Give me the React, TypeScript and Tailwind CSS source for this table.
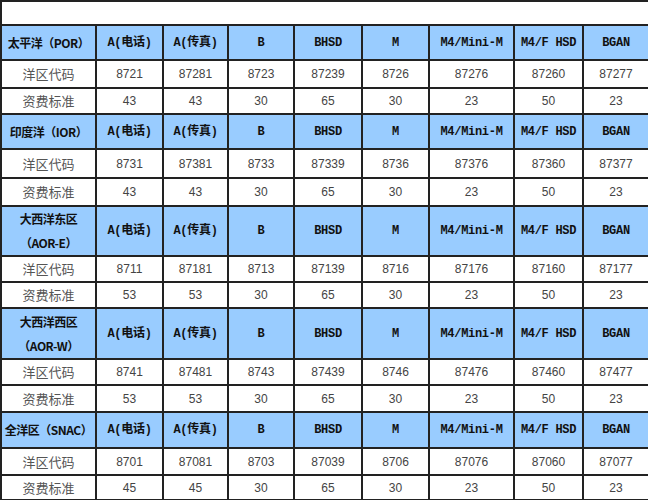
import React from "react";

const cols = ["w-[95px]", "w-[67px]", "w-[65px]", "w-[66px]", "w-[68px]", "w-[67px]", "w-[85px]", "w-[69px]", "w-[66px]"];

const heads = ["A(电话)", "A(传真)", "B", "BHSD", "M", "M4/Mini-M", "M4/F HSD", "BGAN"];

type Block = {
  name: string[];
  h: string;
  codes: string[];
  fees: string[];
  rows: [string, string];
};

const blocks: Block[] = [
  {
    name: ["太平洋（POR）"],
    h: "h-[35px]",
    codes: ["8721", "87281", "8723", "87239", "8726", "87276", "87260", "87277"],
    fees: ["43", "43", "30", "65", "30", "23", "50", "23"],
    rows: ["h-[28px]", "h-[26px]"],
  },
  {
    name: ["印度洋（IOR）"],
    h: "h-[35px]",
    codes: ["8731", "87381", "8733", "87339", "8736", "87376", "87360", "87377"],
    fees: ["43", "43", "30", "65", "30", "23", "50", "23"],
    rows: ["h-[29px]", "h-[28px]"],
  },
  {
    name: ["大西洋东区", "（AOR-E）"],
    h: "h-[50px]",
    codes: ["8711", "87181", "8713", "87139", "8716", "87176", "87160", "87177"],
    fees: ["53", "53", "30", "65", "30", "23", "50", "23"],
    rows: ["h-[26px]", "h-[26px]"],
  },
  {
    name: ["大西洋西区", "（AOR-W）"],
    h: "h-[51px]",
    codes: ["8741", "87481", "8743", "87439", "8746", "87476", "87460", "87477"],
    fees: ["53", "53", "30", "65", "30", "23", "50", "23"],
    rows: ["h-[26px]", "h-[27px]"],
  },
  {
    name: ["全洋区（SNAC）"],
    h: "h-[36px]",
    codes: ["8701", "87081", "8703", "87039", "8706", "87076", "87060", "87077"],
    fees: ["45", "45", "30", "65", "30", "23", "50", "23"],
    rows: ["h-[27px]", "h-[25px]"],
  },
];

const cell = "border-2 border-[#222] text-center align-middle p-0 whitespace-nowrap overflow-hidden";
const cjk = "font-['Noto_Sans_CJK_SC',sans-serif]";
const mono = "font-['Liberation_Mono','Noto_Sans_CJK_SC',monospace]";
const num = "font-['Liberation_Sans',Arial,sans-serif]";

export default function App() {
  return (
    <div className="w-[648px] h-[500px] bg-white overflow-hidden">
      <div className="h-[24px] border-t-2 border-l-2 border-[#222]" />
      <table className="table-fixed border-collapse w-[648px]">
        <colgroup>
          {cols.map((w, i) => (
            <col key={i} className={w} />
          ))}
        </colgroup>
        <tbody>
          {blocks.map((b, bi) => (
            <React.Fragment key={bi}>
              <tr className={`${b.h} bg-[#99ccff]`}>
                <td className={`${cell} ${cjk} text-[12px] font-bold text-[#111] leading-[24px] tracking-[-0.5px]`}>
                  {b.name.map((n, i) => (
                    <div key={i}>{n}</div>
                  ))}
                </td>
                {heads.map((h) => (
                  <td key={h} className={`${cell} ${mono} text-[12px] font-bold text-[#111] tracking-[-0.3px]`}>
                    {h}
                  </td>
                ))}
              </tr>
              <tr className={b.rows[0]}>
                <td className={`${cell} ${cjk} text-[13px] text-[#555]`}>洋区代码</td>
                {b.codes.map((c, i) => (
                  <td key={i} className={`${cell} ${num} text-[12px] text-[#444]`}>
                    {c}
                  </td>
                ))}
              </tr>
              <tr className={b.rows[1]}>
                <td className={`${cell} ${cjk} text-[13px] text-[#555]`}>资费标准</td>
                {b.fees.map((c, i) => (
                  <td key={i} className={`${cell} ${num} text-[12px] text-[#444]`}>
                    {c}
                  </td>
                ))}
              </tr>
            </React.Fragment>
          ))}
        </tbody>
      </table>
    </div>
  );
}
